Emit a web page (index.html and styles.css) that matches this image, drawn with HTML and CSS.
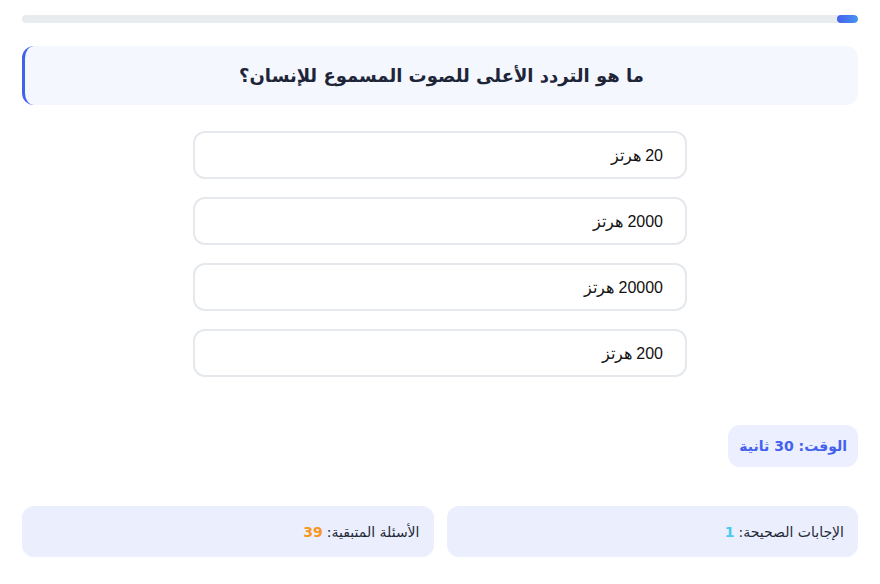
FILE: index.html
```html
<!DOCTYPE html>
<html lang="ar" dir="rtl">
<head>
<meta charset="utf-8">
<link rel="stylesheet" href="styles.css">
</head>
<body>
<div class="quiz">
  <div class="progress"><div class="progress-fill" style="width: 2.5%"></div></div>
  <div class="question">ما هو التردد الأعلى للصوت المسموع للإنسان؟</div>
  <div class="options">
    <button class="option">20 هرتز</button>
    <button class="option">2000 هرتز</button>
    <button class="option">20000 هرتز</button>
    <button class="option">200 هرتز</button>
  </div>
  <div class="timer-row"><div class="timer">الوقت: 30 ثانية</div></div>
  <div class="stats">
    <div class="stat">الإجابات الصحيحة: <span class="num correct">1</span></div>
    <div class="stat">الأسئلة المتبقية: <span class="num remaining">39</span></div>
  </div>
</div>
</body>
</html>
```
FILE: styles.css
```css
* { box-sizing: border-box; }
html, body { margin: 0; padding: 0; background: #fff; }
body { font-family: "DejaVu Sans", "Noto Sans", sans-serif; color: #1f2937; }
.quiz { padding: 15px 22px 0; }
.progress { height: 8px; background: #e9ecef; border-radius: 4px; overflow: hidden; }
.progress-fill { height: 100%; background: linear-gradient(90deg, #4361ee, #4895ef); border-radius: 4px; }
.question {
  margin-top: 23px;
  height: 59px;
  background: #f4f7fe;
  border-left: 3px solid #4361ee;
  border-radius: 12px;
  padding: 0 20px;
  display: flex; align-items: center; justify-content: center;
  text-align: center;
  font-size: 18px;
  font-weight: bold;
  color: #1e2538;
}
.options { display: flex; flex-direction: column; align-items: center; gap: 18px; margin-top: 26px; }
.option {
  width: 494px; height: 48px;
  background: #fff;
  border: 2px solid #e5e8ec;
  border-radius: 12px;
  text-align: right;
  padding: 0 22px;
  font-family: "Liberation Sans", Arial, sans-serif;
  font-size: 16px;
  color: #111;
  direction: rtl;
}
.timer-row { display: flex; margin-top: 48px; }
.timer {
  height: 42px;
  display: flex; align-items: center;
  background: #ebefff;
  color: #4361ee;
  font-weight: bold;
  font-size: 14px;
  padding: 0 11px;
  border-radius: 12px;
}
.stats { display: grid; grid-template-columns: 1fr 1fr; gap: 13px; margin-top: 39px; }
.stat {
  height: 51px;
  display: flex; align-items: center; gap: 4px;
  background: #ebeffd;
  border-radius: 12px;
  padding: 0 14px;
  font-size: 14px;
  color: #1f2937;
}
.num { font-weight: bold; }
.correct { color: #4cc9f0; }
.remaining { color: #f8961e; }
```
